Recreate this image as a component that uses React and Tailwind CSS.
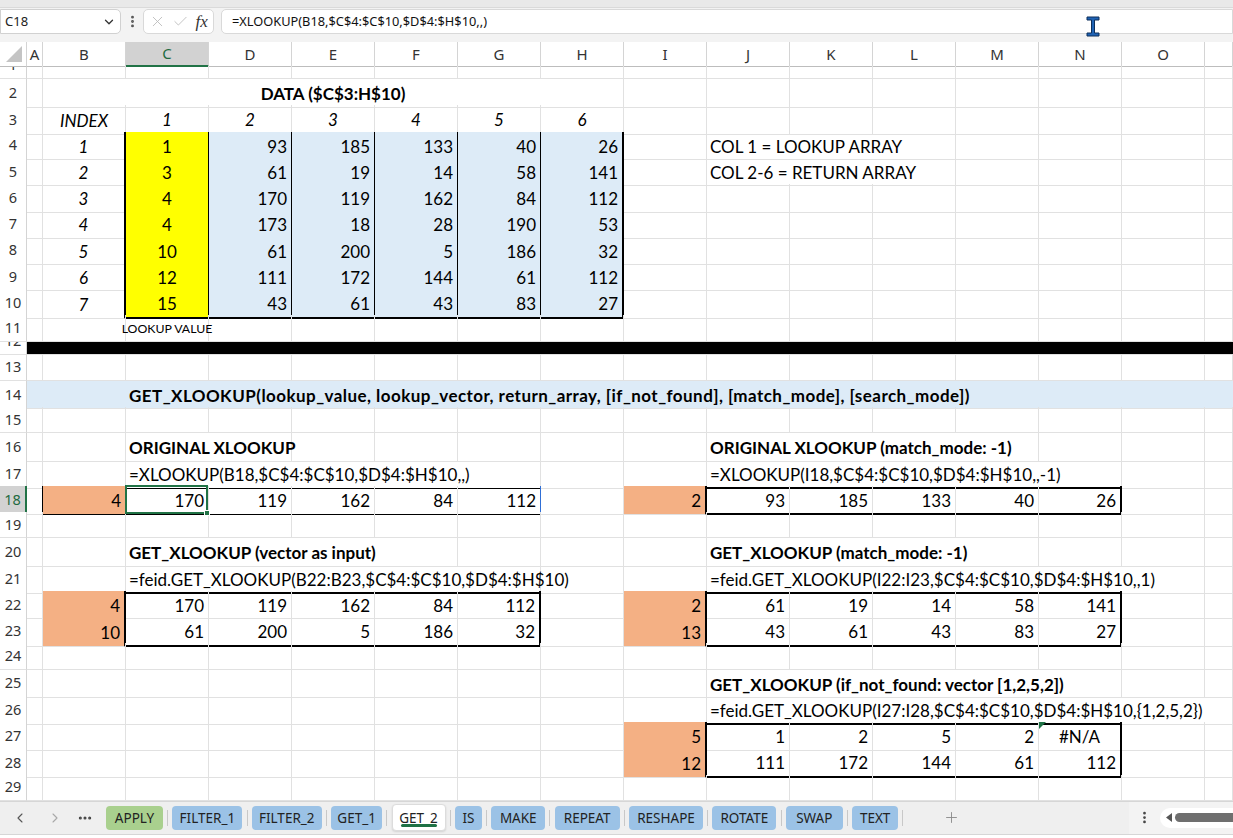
import clsx from "clsx";
import {
  ChevronDown,
  EllipsisVertical,
  X,
  Check,
  Plus,
  ChevronLeft,
  ChevronRight,
  Ellipsis,
} from "lucide-react";

// sheet geometry: row header, narrow A, then B..O at 83px, P takes the rest
const GRID = "grid grid-cols-[27px_16px_repeat(14,83px)_1fr]";
const COLS = "ABCDEFGHIJKLMNOP".split("");

const SPAN = {
  1: "",
  2: "col-span-2",
  3: "col-span-3",
  4: "col-span-4",
  5: "col-span-5",
  7: "col-span-7",
  14: "col-span-14",
  16: "col-span-16",
};
const RB = {
  g: "border-r border-r-[#e1e1e1]",
  k: "border-r border-r-black",
  K: "border-r-2 border-r-black",
  blue: "border-r border-r-[#2f6fd6]",
  n: "",
};
const BB = {
  g: "border-b border-b-[#e1e1e1]",
  k: "border-b border-b-black",
  K: "border-b-2 border-b-black",
  n: "",
};
const AL = {
  l: "justify-start pl-[3px]",
  r: "justify-end pr-[4px]",
  c: "justify-center",
};
const FT = {
  n: "",
  b: "font-bold",
  bw: "font-bold tracking-[0.45px]",
  i: "italic",
  s: "text-[12.3px]",
};

const Y = "bg-[#ffff00]";
const BL = "bg-[#ddebf7]";
const OR = "bg-[#f4b084]";

const DATA = [
  [1, 93, 185, 133, 40, 26],
  [3, 61, 19, 14, 58, 141],
  [4, 170, 119, 162, 84, 112],
  [4, 173, 18, 28, 190, 53],
  [10, 61, 200, 5, 186, 32],
  [12, 111, 172, 144, 61, 112],
  [15, 43, 61, 43, 83, 27],
];

function tableRow(i) {
  const vals = DATA[i];
  const last = i === DATA.length - 1;
  const cells = {
    B: { t: i + 1, a: "c", f: "i", r: "K" },
    C: { t: vals[0], a: "c", bg: Y, r: "k", b: last ? "K" : "k" },
  };
  "DEFGH".split("").forEach((col, j) => {
    cells[col] = {
      t: vals[j + 1],
      a: "r",
      bg: BL,
      r: col === "H" ? "K" : "k",
      b: last ? "K" : "k",
    };
  });
  return cells;
}

// a run of right-aligned numbers across consecutive columns
function nums(cols, vals, opts = {}) {
  const out = {};
  cols.split("").forEach((col, j) => {
    out[col] = { t: vals[j], a: "r", ...opts };
  });
  return out;
}

const ROWS = [
  { n: 1, h: "h-[13px]", partial: true, cells: {} },
  { n: 2, cells: { B: { span: 7, t: "DATA ($C$3:H$10)", a: "c", f: "b" } } },
  {
    n: 3,
    cells: {
      B: { t: "INDEX", a: "c", f: "i" },
      C: { t: 1, a: "c", f: "i", b: "K" },
      D: { t: 2, a: "c", f: "i", b: "K" },
      E: { t: 3, a: "c", f: "i", b: "K" },
      F: { t: 4, a: "c", f: "i", b: "K" },
      G: { t: 5, a: "c", f: "i", b: "K" },
      H: { t: 6, a: "c", f: "i", b: "K" },
    },
  },
  { n: 4, cells: { ...tableRow(0), J: { span: 3, t: "COL 1 = LOOKUP ARRAY" } } },
  { n: 5, cells: { ...tableRow(1), J: { span: 3, t: "COL 2-6 = RETURN ARRAY" } } },
  { n: 6, cells: tableRow(2) },
  { n: 7, cells: tableRow(3) },
  { n: 8, cells: tableRow(4) },
  { n: 9, cells: tableRow(5) },
  { n: 10, cells: tableRow(6) },
  { n: 11, cells: { C: { t: "LOOKUP VALUE", a: "c", f: "s" } } },
  { n: 12, h: "h-[13px]", partial: true, cells: { A: { span: 16, bg: "bg-black", r: "n" } } },
  { n: 13, cells: {} },
  {
    n: 14,
    cells: {
      A: { bg: BL, r: "n" },
      B: { bg: BL, r: "n" },
      C: {
        span: 14,
        bg: BL,
        r: "n",
        f: "bw",
        t: "GET_XLOOKUP(lookup_value, lookup_vector, return_array, [if_not_found], [match_mode], [search_mode])",
      },
    },
  },
  { n: 15, cells: {} },
  {
    n: 16,
    cells: {
      C: { span: 2, f: "b", t: "ORIGINAL XLOOKUP" },
      J: { span: 4, f: "b", t: "ORIGINAL XLOOKUP (match_mode: -1)" },
    },
  },
  {
    n: 17,
    cells: {
      B: { b: "k" },
      C: { span: 5, b: "k", t: "=XLOOKUP(B18,$C$4:$C$10,$D$4:$H$10,,)" },
      J: { span: 5, b: "K", t: "=XLOOKUP(I18,$C$4:$C$10,$D$4:$H$10,,-1)" },
    },
  },
  {
    n: 18,
    sel: true,
    cells: {
      A: { r: "k" },
      B: { t: 4, a: "r", bg: OR, r: "k", b: "k" },
      ...nums("DEF", [119, 162, 84], { b: "k" }),
      C: { t: 170, a: "r", b: "k", sel: true },
      G: { t: 112, a: "r", b: "k", r: "blue" },
      I: { t: 2, a: "r", bg: OR, r: "K" },
      ...nums("JKLM", [93, 185, 133, 40], { b: "K" }),
      N: { t: 26, a: "r", b: "K", r: "K" },
    },
  },
  { n: 19, cells: {} },
  {
    n: 20,
    cells: {
      C: { span: 4, f: "b", t: "GET_XLOOKUP (vector as input)" },
      J: { span: 4, f: "b", t: "GET_XLOOKUP (match_mode: -1)" },
    },
  },
  {
    n: 21,
    cells: {
      C: { span: 5, b: "K", t: "=feid.GET_XLOOKUP(B22:B23,$C$4:$C$10,$D$4:$H$10)" },
      J: { span: 5, b: "K", r: "n", t: "=feid.GET_XLOOKUP(I22:I23,$C$4:$C$10,$D$4:$H$10,,1)" },
    },
  },
  {
    n: 22,
    cells: {
      B: { t: 4, a: "r", bg: OR, r: "K" },
      ...nums("CDEF", [170, 119, 162, 84]),
      G: { t: 112, a: "r", r: "K" },
      I: { t: 2, a: "r", bg: OR, r: "K" },
      ...nums("JKLM", [61, 19, 14, 58]),
      N: { t: 141, a: "r", r: "K" },
    },
  },
  {
    n: 23,
    cells: {
      B: { t: 10, a: "r", bg: OR, r: "K" },
      ...nums("CDEF", [61, 200, 5, 186], { b: "K" }),
      G: { t: 32, a: "r", r: "K", b: "K" },
      I: { t: 13, a: "r", bg: OR, r: "K" },
      ...nums("JKLM", [43, 61, 43, 83], { b: "K" }),
      N: { t: 27, a: "r", r: "K", b: "K" },
    },
  },
  { n: 24, cells: {} },
  { n: 25, cells: { J: { span: 5, f: "b", t: "GET_XLOOKUP (if_not_found: vector [1,2,5,2])" } } },
  {
    n: 26,
    cells: {
      J: { span: 5, b: "K", r: "n", t: "=feid.GET_XLOOKUP(I27:I28,$C$4:$C$10,$D$4:$H$10,{1,2,5,2})" },
      O: { r: "n" },
    },
  },
  {
    n: 27,
    cells: {
      I: { t: 5, a: "r", bg: OR, r: "K" },
      ...nums("JKLM", [1, 2, 5, 2]),
      N: { t: "#N/A", a: "c", r: "K", tri: true },
    },
  },
  {
    n: 28,
    cells: {
      I: { t: 12, a: "r", bg: OR, r: "K" },
      ...nums("JKLM", [111, 172, 144, 61], { b: "K" }),
      N: { t: 112, a: "r", r: "K", b: "K" },
    },
  },
  { n: 29, cells: {} },
];

function Cell({ span = 1, t, a = "l", f = "n", bg = "", r = "g", b = "g", sel, tri }) {
  return (
    <div
      className={clsx(
        "relative flex items-center whitespace-nowrap pt-[2px]",
        SPAN[span],
        RB[r],
        BB[b],
        AL[a],
        FT[f],
        bg
      )}
    >
      {t}
      {sel && (
        <div className="absolute -top-px -left-px right-0 bottom-0 z-10 border-2 border-[#217346]">
          <div className="absolute -right-[4px] -bottom-[4px] w-[6px] h-[6px] bg-[#217346] border border-white" />
        </div>
      )}
      {tri && (
        <div className="absolute top-0 left-0 w-0 h-0 border-t-[7px] border-r-[7px] border-t-[#1e7145] border-r-transparent" />
      )}
    </div>
  );
}

function RowHead({ n, sel, partial }) {
  return (
    <div
      className={clsx(
        "flex justify-center overflow-hidden border-b border-b-[#e1e1e1] font-['Noto_Sans',sans-serif] text-[14.5px] not-italic font-normal tracking-normal",
        partial ? "items-end" : "items-center",
        sel
          ? "bg-[#d2d2d2] text-[#1e6b41] border-r-2 border-r-[#217346]"
          : "bg-white text-[#333] border-r border-r-[#d4d4d4]"
      )}
    >
      <div className="h-[26.25px] shrink-0 flex items-center">{n}</div>
    </div>
  );
}

function Row({ n, h = "h-[26.25px]", cells, sel, partial }) {
  const out = [];
  let i = 0;
  while (i < COLS.length) {
    const c = cells[COLS[i]] || {};
    out.push(<Cell key={COLS[i]} {...c} />);
    i += c.span || 1;
  }
  return (
    <div className={clsx(GRID, h)}>
      <RowHead n={n} sel={sel} partial={partial} />
      {out}
    </div>
  );
}

function ColumnHeader() {
  return (
    <div className={clsx(GRID, "h-[24px] font-['Noto_Sans',sans-serif] text-[15px] text-[#333]")}>
      <div className="relative bg-white border-r border-r-[#d4d4d4] border-b border-b-[#bdbdbd]">
        <svg className="absolute right-[4px] bottom-[4px]" width="16" height="16" viewBox="0 0 16 16">
          <polygon points="16,0 16,16 0,16" fill="#c4c4c4" />
        </svg>
      </div>
      {COLS.map((c) =>
        c === "C" ? (
          <div
            key={c}
            className="flex items-center justify-center bg-[#d2d2d2] text-[#1e6b41] border-r border-r-[#d4d4d4] border-b-2 border-b-[#217346]"
          >
            C
          </div>
        ) : (
          <div
            key={c}
            className="flex items-center justify-center bg-white border-r border-r-[#d4d4d4] border-b border-b-[#bdbdbd]"
          >
            {c === "P" ? "" : c}
          </div>
        )
      )}
    </div>
  );
}

function FormulaBar() {
  return (
    <div className="font-['Noto_Sans',sans-serif]">
      <div className="h-[8px] bg-[#e9e9e9] border-b border-b-[#dadada]" />
      <div className="h-[34px] bg-[#f3f3f3] flex items-start pt-[1px]">
        <div className="w-[121px] h-[25px] bg-white border border-[#d1d1d1] rounded-r-[5px] flex items-center justify-between pl-[4px] pr-[4px] text-[13px] text-[#222]">
          <span>C18</span>
          <ChevronDown size={14} strokeWidth={2.2} className="text-[#333]" />
        </div>
        <div className="w-[22px] h-[25px] flex items-center justify-center text-[#555]">
          <EllipsisVertical size={15} strokeWidth={2.6} />
        </div>
        <div className="w-[71px] h-[25px] bg-white border border-[#d9d9d9] rounded-[5px] flex items-center justify-around px-[2px]">
          <X size={17} strokeWidth={1.2} className="text-[#b8b8b8]" />
          <Check size={17} strokeWidth={1.2} className="text-[#b8b8b8]" />
          <span className="font-['Liberation_Serif',serif] italic text-[17px] text-[#333] leading-none">fx</span>
        </div>
        <div className="ml-[7px] flex-1 h-[25px] bg-white border border-[#d9d9d9] rounded-l-[5px] flex items-center pl-[10px] text-[12.8px] text-[#111]">
          =XLOOKUP(B18,$C$4:$C$10,$D$4:$H$10,,)
        </div>
      </div>
    </div>
  );
}

const TABS = [
  ["APPLY", "w-[57px]", "bg-[#a9d08e]"],
  ["FILTER_1", "w-[70px]", "bg-[#9bc2e6]"],
  ["FILTER_2", "w-[70px]", "bg-[#9bc2e6]"],
  ["GET_1", "w-[51px]", "bg-[#9bc2e6]"],
  ["GET_2", "w-[54px]", "active"],
  ["IS", "w-[27px]", "bg-[#9bc2e6]"],
  ["MAKE", "w-[54px]", "bg-[#9bc2e6]"],
  ["REPEAT", "w-[65px]", "bg-[#9bc2e6]"],
  ["RESHAPE", "w-[74px]", "bg-[#9bc2e6]"],
  ["ROTATE", "w-[64px]", "bg-[#9bc2e6]"],
  ["SWAP", "w-[57px]", "bg-[#9bc2e6]"],
  ["TEXT", "w-[46px]", "bg-[#9bc2e6]"],
];

function SheetTabs() {
  return (
    <div className="font-['Noto_Sans',sans-serif]">
      <div className="h-[33px] flex items-center bg-[#efefef] border-t border-t-[#d6d6d6]">
        <div className="w-[106px] flex items-center text-[#555]">
          <ChevronLeft size={16} strokeWidth={1.6} className="ml-[12px]" />
          <ChevronRight size={16} strokeWidth={1.6} className="ml-[19px] text-[#a8a8a8]" />
          <Ellipsis size={16} strokeWidth={2.6} className="ml-[14px] text-[#444]" />
        </div>
        {TABS.map(([name, w, bg], i) => (
          <div key={name} className="flex items-center">
            {i > 0 && <div className="w-px h-[16px] bg-[#c8c8c8] mx-[4.2px]" />}
            {bg === "active" ? (
              <div
                className={clsx(
                  w,
                  "relative h-[27px] bg-white rounded-[4px] border border-[#dcdcdc] shadow-[0_1px_2px_rgba(0,0,0,0.12)] flex items-center justify-center text-[13.5px] text-[#222]"
                )}
              >
                GET_2
                <div className="absolute left-[8px] right-[8px] bottom-[3px] h-[3px] rounded-full bg-[#1e7145]" />
              </div>
            ) : (
              <div
                className={clsx(
                  w,
                  bg,
                  "h-[24px] rounded-[4px] flex items-center justify-center text-[13.5px] text-[#222]"
                )}
              >
                {name}
              </div>
            )}
          </div>
        ))}
        <div className="w-px h-[16px] bg-[#c8c8c8] ml-[4.2px]" />
        <Plus size={17} strokeWidth={1.3} className="ml-[40px] text-[#8a8a8a]" />
        <div className="ml-auto h-full w-[104px] bg-[#f3f3f3] flex items-center">
          <EllipsisVertical size={15} strokeWidth={2.4} className="ml-[8px] text-[#444]" />
          <div className="ml-[8px] flex-1 h-[20px] bg-white rounded-l-full flex items-center pl-[6px]">
            <svg width="6" height="9" viewBox="0 0 6 9">
              <polygon points="6,0 6,9 0,4.5" fill="#555" />
            </svg>
            <div className="ml-[3px] flex-1 h-[9px] bg-[#6f6f6f] rounded-l-full" />
          </div>
        </div>
      </div>
      <div className="h-[4px] bg-white border-t border-t-[#d6d6d6]" />
    </div>
  );
}

export default function App() {
  return (
    <div className="relative w-[1233px] h-[838px] overflow-hidden bg-white">
      <FormulaBar />
      <ColumnHeader />
      <div className="font-['Lato',sans-serif] text-[17px] text-black">
        {ROWS.map((r) => (
          <Row key={r.n} {...r} />
        ))}
      </div>
      <SheetTabs />
      {/* text cursor hovering over the formula bar */}
      <svg className="absolute left-[1086px] top-[16px]" width="14" height="21" viewBox="0 0 14 21">
        <path
          d="M1 1h12v3H8.5v13H13v3H1v-3h4.5V4H1z"
          fill="#1f63b4"
          stroke="#0d2f5a"
          strokeWidth="1"
        />
      </svg>
    </div>
  );
}
